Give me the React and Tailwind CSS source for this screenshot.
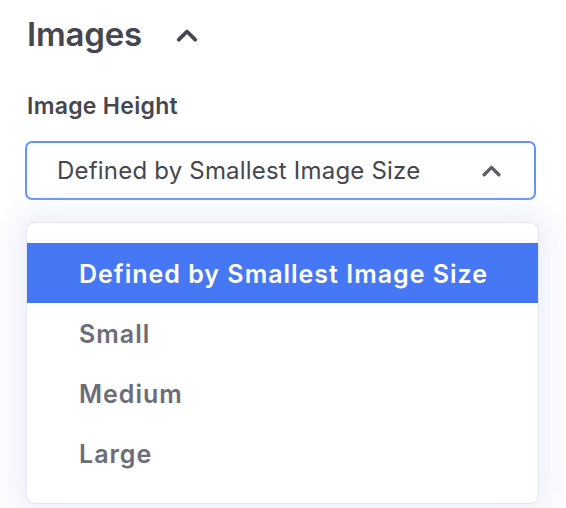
import React, { useState } from 'react';

const OPTIONS = ['Defined by Smallest Image Size', 'Small', 'Medium', 'Large'];

const Chevron = ({ className }) => (
  <svg viewBox="0 0 20 12" fill="none" className={className}>
    <path d="M3 10 L10 3 L17 10" stroke="currentColor" strokeWidth="3.2" strokeLinecap="round" strokeLinejoin="round" />
  </svg>
);

const App = () => {
  const [selected, setSelected] = useState(OPTIONS[0]);

  return (
    <div className="w-[566px] h-[508px] bg-white overflow-hidden font-['Inter',sans-serif]">
      <div className="flex items-center pt-[13px] pl-[27px] h-[56px]">
        <h2 className="text-[33px] font-semibold text-[#45464f] tracking-[-0.2px]">Images</h2>
        <Chevron className="w-[24px] h-[14px] ml-[33px] text-[#45464f]" />
      </div>

      <div className="pl-[27px] mt-[36px] text-[23px] font-semibold text-[#45464f] tracking-[0.3px] leading-[28px]">
        Image Height
      </div>

      <button className="mt-[21px] ml-[25px] w-[511px] h-[59px] flex items-center justify-between pl-[30px] pr-[32px] border-2 border-[#5f95f4] rounded-[7px] bg-white">
        <span className="text-[24px] text-[#45464f] tracking-[0.2px] pt-[1px]">{selected}</span>
        <Chevron className="w-[21px] h-[13px] text-[#5e5f68]" />
      </button>

      <div className="mt-[22px] ml-[26px] w-[513px] border border-[#e6e7ec] rounded-[9px] bg-white py-[20px] shadow-[0_0_30px_10px_rgba(225,228,245,0.6)]">
        {OPTIONS.map((opt) => {
          const active = opt === selected;
          return (
            <div
              key={opt}
              onClick={() => setSelected(opt)}
              className={`h-[60px] flex items-center pl-[52px] pt-[3px] text-[25px] font-semibold tracking-[1px] ${
                active ? 'bg-[#4677f5] text-white' : 'text-[#6b6d7a]'
              }`}
            >
              {opt}
            </div>
          );
        })}
      </div>
    </div>
  );
};

export default App;
